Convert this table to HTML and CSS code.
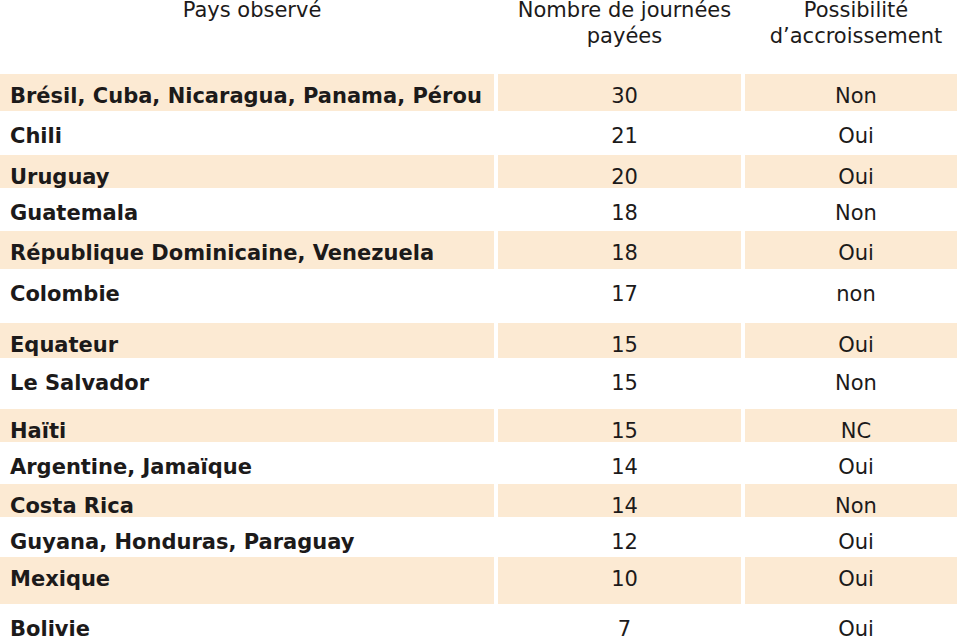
FILE: index.html
```html
<!DOCTYPE html>
<html lang="fr">
<head>
<meta charset="utf-8">
<title>Journées payées</title>
<link rel="stylesheet" href="styles.css">
</head>
<body>
<div class="table">
  <div class="th"><span class="line">Pays observé</span></div>
  <div class="th"><span class="line">Nombre de journées</span><span class="line">payées</span></div>
  <div class="th"><span class="line">Possibilité</span><span class="line">d’accroissement</span></div>

  <div class="td country alt">Brésil, Cuba, Nicaragua, Panama, Pérou</div>
  <div class="td num alt">30</div>
  <div class="td num alt">Non</div>

  <div class="td country">Chili</div>
  <div class="td num">21</div>
  <div class="td num">Oui</div>

  <div class="td country alt">Uruguay</div>
  <div class="td num alt">20</div>
  <div class="td num alt">Oui</div>

  <div class="td country">Guatemala</div>
  <div class="td num">18</div>
  <div class="td num">Non</div>

  <div class="td country alt">République Dominicaine, Venezuela</div>
  <div class="td num alt">18</div>
  <div class="td num alt">Oui</div>

  <div class="td country">Colombie</div>
  <div class="td num">17</div>
  <div class="td num">non</div>

  <div class="td country alt">Equateur</div>
  <div class="td num alt">15</div>
  <div class="td num alt">Oui</div>

  <div class="td country">Le Salvador</div>
  <div class="td num">15</div>
  <div class="td num">Non</div>

  <div class="td country alt">Haïti</div>
  <div class="td num alt">15</div>
  <div class="td num alt">NC</div>

  <div class="td country">Argentine, Jamaïque</div>
  <div class="td num">14</div>
  <div class="td num">Oui</div>

  <div class="td country alt">Costa Rica</div>
  <div class="td num alt">14</div>
  <div class="td num alt">Non</div>

  <div class="td country">Guyana, Honduras, Paraguay</div>
  <div class="td num">12</div>
  <div class="td num">Oui</div>

  <div class="td country alt">Mexique</div>
  <div class="td num alt">10</div>
  <div class="td num alt">Oui</div>

  <div class="td country">Bolivie</div>
  <div class="td num">7</div>
  <div class="td num">Oui</div>
</div>
</body>
</html>
```

FILE: styles.css
```css
html, body {
  margin: 0;
  padding: 0;
  background: #ffffff;
}

body {
  font-family: "DejaVu Sans", Verdana, sans-serif;
  font-size: 21px;
  color: #1c1a1a;
  overflow: hidden;
}

.table {
  display: grid;
  grid-template-columns: 494px 243px 212px;
  grid-template-rows: 74px 37px 44px 33px 43px 38px 54px 35px 51px 33px 42px 33px 40px 47px 40px;
  column-gap: 4px;
  width: 957px;
}

.th {
  padding-left: 10px;
  text-align: center;
  font-weight: normal;
}

.th .line {
  display: block;
  line-height: 20px;
}

.th .line + .line {
  margin-top: 6px;
}

.td {
  padding-left: 10px;
  padding-top: 13.3px;
  line-height: 24px;
  white-space: nowrap;
}

.td.alt {
  background: #fcead3;
  padding-top: 9.6px;
}

.country {
  font-weight: bold;
}

.num {
  text-align: center;
}
```
